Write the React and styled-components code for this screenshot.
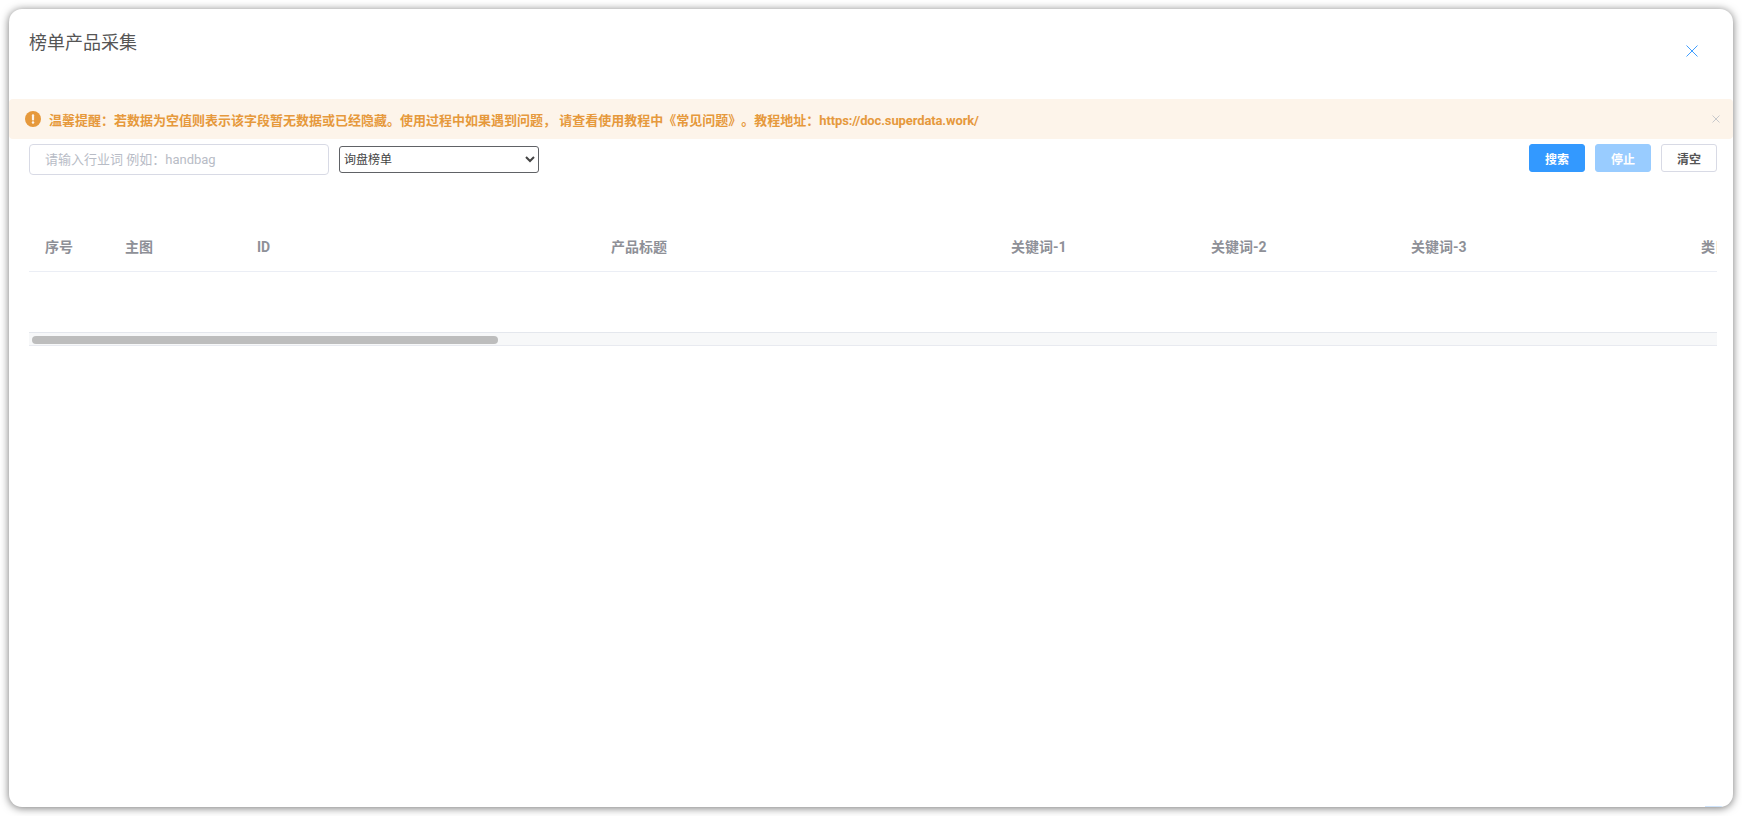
import React from 'react'
import styled, { createGlobalStyle } from 'styled-components'

const GlobalStyle = createGlobalStyle`
html, body {
    margin: 0;
    height: 100%;
    background: #fff;
    overflow: hidden;
}
* {
    box-sizing: border-box;
}
body, button, input, select {
    font-family: Roboto, "Noto Sans CJK SC", sans-serif;
    text-spacing-trim: space-all;
}
`;

const Page = styled.div`
height: 816px;
padding: 9px;
`;

// Dialog window
const Dialog = styled.div`
position: relative;
height: 798px;
background: #fff;
border-radius: 13px;
box-shadow: 0 1px 8px rgba(0,0,0,0.55);
display: flex;
flex-direction: column;
overflow: hidden;
`;

// Sliver of a floating button that peeks in at the bottom edge
const FloatSliver = styled.div`
position: absolute;
right: 11px;
bottom: 0;
width: 17px;
height: 1px;
background: #cfe3fa;
`;

const Header = styled.div`
height: 90px;
display: flex;
justify-content: space-between;
align-items: flex-start;
padding: 22px 35px 0 20px;
`;

const Title = styled.span`
font-size: 18px;
line-height: 24px;
color: #555;
`;

const CloseButton = styled.button`
all: unset;
display: block;
margin-top: 14px;
line-height: 0;
`;

// Warning banner
const Alert = styled.div`
height: 40px;
background: #fdf4ea;
border-radius: 4px;
display: flex;
align-items: center;
gap: 8px;
padding: 0 13px 0 16px;
color: #e6993c;
font-size: 13px;
font-weight: 700;
`;

const AlertText = styled.span`
flex: 1;
`;

const AlertLink = styled.span`
letter-spacing: -0.12px;
`;

const Toolbar = styled.div`
display: flex;
align-items: flex-start;
padding: 5px 16px 0 20px;
`;

const SearchInput = styled.input`
width: 300px;
height: 31px;
border: 1px solid #d8dae5;
border-radius: 4px;
padding: 0 15px;
font-size: 13px;
outline: none;
&::placeholder {
    color: #b8bcc6;
    opacity: 1;
}
`;

const ListSelect = styled.select`
width: 200px;
height: 27px;
margin: 2px 0 0 10px;
font-size: 12px;
color: #444;
background: #fff;
border: 1px solid #606266;
border-radius: 3px;
`;

const Actions = styled.div`
margin-left: auto;
display: flex;
gap: 10px;
`;

const ActionButton = styled.button`
width: 56px;
height: 28px;
border-radius: 3px;
font-size: 12px;
font-weight: 700;
padding: 0;
border: 1px solid ${p => p.$plain ? '#d8dae5' : p.$disabled ? '#99ccff' : '#3399ff'};
background: ${p => p.$plain ? '#fff' : p.$disabled ? '#99ccff' : '#3399ff'};
color: ${p => p.$plain ? '#555' : '#fff'};
`;

// Product table, only the header row since there is no data yet
const TableWrap = styled.div`
margin: 30px 16px 0 20px;
overflow: hidden;
`;

const Table = styled.div`
width: 6100px;
`;

const HeadRow = styled.div`
display: flex;
height: 67px;
padding-top: 18px;
border-bottom: 1px solid #ebeef5;
`;

const HeadCell = styled.div`
flex: 0 0 ${p => p.$w}px;
padding-left: ${p => p.$pad ?? 16}px;
display: flex;
align-items: center;
font-size: 14px;
line-height: 20px;
font-weight: 700;
color: #8e9097;
`;

const EmptyRow = styled.div`
height: 60px;
`;

const ScrollTrack = styled.div`
height: 14px;
background: #f7f8f9;
border-top: 1px solid #e4e7ed;
border-bottom: 1px solid #e8eaf0;
padding: 3px 3px 0;
`;

const ScrollThumb = styled.div`
height: 8px;
background: #bdbdbd;
border-radius: 4px;
`;

const columns = [
    {name: '序号', w: 80},
    {name: '主图', w: 148},
    {name: 'ID', w: 200, pad: 0},
    {name: '产品标题', w: 538, pad: 154},
    {name: '关键词-1', w: 200},
    {name: '关键词-2', w: 200},
    {name: '关键词-3', w: 200},
    {name: '类目', w: 400, pad: 106},
    {name: '价格', w: 200},
    {name: '销量', w: 200},
]

const thumbWidth = 466

const App = () => {
    return (
        <Page>
            <GlobalStyle/>
            <Dialog>
                <Header>
                    <Title>榜单产品采集</Title>
                    <CloseButton aria-label="关闭">
                        <svg width="12" height="12" viewBox="0 0 12 12">
                            <path d="M0.5 0.5 L11.5 11.5 M11.5 0.5 L0.5 11.5" stroke="#409eff" strokeWidth="1" fill="none"/>
                        </svg>
                    </CloseButton>
                </Header>
                <Alert>
                    <svg width="16" height="16" viewBox="0 0 16 16">
                        <circle cx="8" cy="8" r="8" fill="#e6993c"/>
                        <rect x="6.9" y="3.2" width="2.2" height="6.2" rx="1" fill="#fdf4ea"/>
                        <circle cx="8" cy="11.6" r="1.25" fill="#fdf4ea"/>
                    </svg>
                    <AlertText>温馨提醒：若数据为空值则表示该字段暂无数据或已经隐藏。使用过程中如果遇到问题， 请查看使用教程中《常见问题》。教程地址：<AlertLink>https://doc.superdata.work/</AlertLink></AlertText>
                    <svg width="8" height="8" viewBox="0 0 8 8">
                        <path d="M0.5 0.5 L7.5 7.5 M7.5 0.5 L0.5 7.5" stroke="#c8c9cc" strokeWidth="1" fill="none"/>
                    </svg>
                </Alert>
                <Toolbar>
                    <SearchInput placeholder="请输入行业词 例如：handbag"/>
                    <ListSelect defaultValue="询盘榜单">
                        <option>询盘榜单</option>
                        <option>热销榜单</option>
                    </ListSelect>
                    <Actions>
                        <ActionButton>搜索</ActionButton>
                        <ActionButton $disabled>停止</ActionButton>
                        <ActionButton $plain>清空</ActionButton>
                    </Actions>
                </Toolbar>
                <TableWrap>
                    <Table>
                        <HeadRow>
                            {columns.map((col) => (
                                <HeadCell key={col.name} $w={col.w} $pad={col.pad}>{col.name}</HeadCell>
                            ))}
                        </HeadRow>
                        <EmptyRow/>
                    </Table>
                    <ScrollTrack>
                        <ScrollThumb style={{width: thumbWidth}}/>
                    </ScrollTrack>
                </TableWrap>
                <FloatSliver/>
            </Dialog>
        </Page>
    )
}

export default App
